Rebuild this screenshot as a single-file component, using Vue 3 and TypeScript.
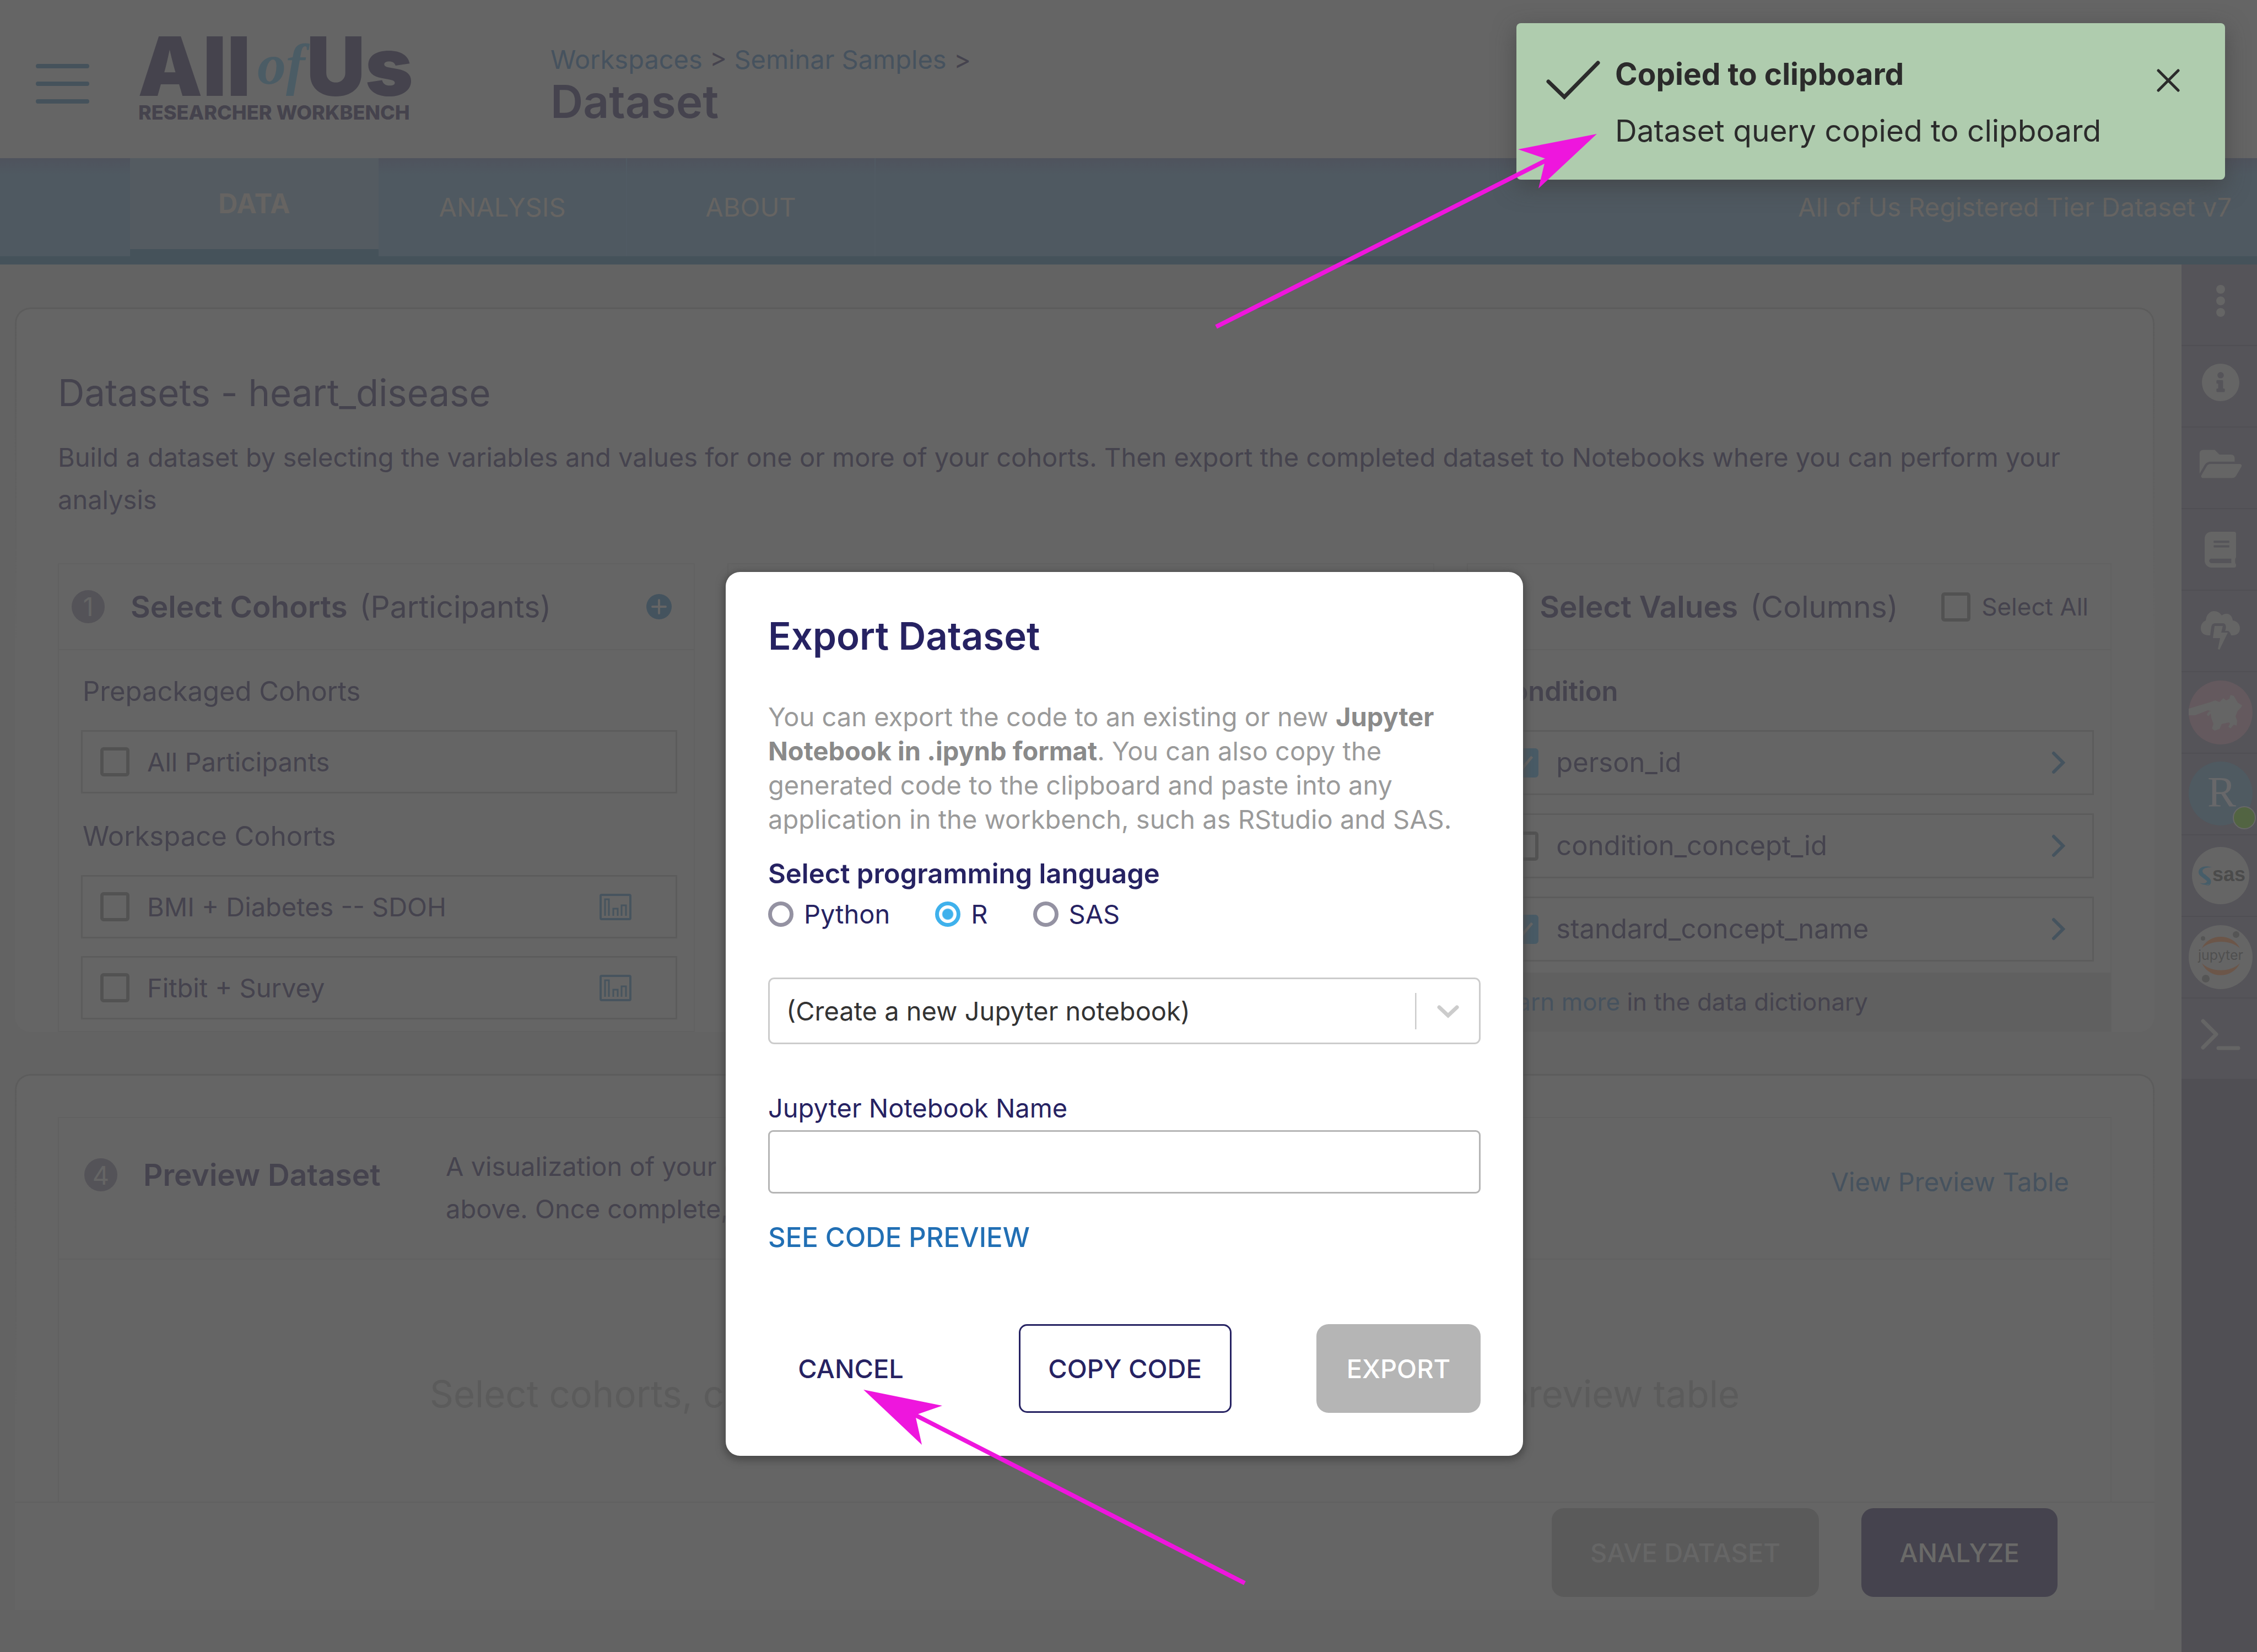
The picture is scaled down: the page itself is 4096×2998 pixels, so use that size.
<script setup lang="ts">
import { ref } from 'vue'

interface Cohort {
  id: string
  name: string
}

interface ValueColumn {
  name: string
  checked: boolean
}

const cohorts: Cohort[] = [
  { id: 'bmi', name: 'BMI + Diabetes -- SDOH' },
  { id: 'fitbit', name: 'Fitbit + Survey' },
]

const columns = ref<ValueColumn[]>([
  { name: 'person_id', checked: true },
  { name: 'condition_concept_id', checked: false },
  { name: 'standard_concept_name', checked: true },
])

const languages = ['Python', 'R', 'SAS']
const language = ref('R')
const notebook = ref('new')
const notebookName = ref('')
</script>

<template>
  <div class="page">
    <header class="top">
      <button class="bare menu" type="button" aria-label="Menu">
        <svg width="97" height="72" viewBox="0 0 97 72" aria-hidden="true">
          <path d="M4 4H93M4 36H93M4 68H93" stroke="#45525b" stroke-width="8" stroke-linecap="round" />
        </svg>
      </button>
      <svg class="logo" width="496" height="160" viewBox="0 0 496 160" role="img" aria-label="All of Us Researcher Workbench">
        <text class="logo-main" x="-3" y="112">All</text>
        <text class="logo-of" x="214" y="90">of</text>
        <text class="logo-main" x="303" y="112">Us</text>
        <text class="logo-sub" x="-2" y="155">RESEARCHER WORKBENCH</text>
      </svg>
      <div class="crumbs">
        <nav class="crumb-line" aria-label="Breadcrumb">
          <a href="#">Workspaces</a> &gt; <a href="#">Seminar Samples</a> &gt;
        </nav>
        <h1>Dataset</h1>
      </div>
    </header>

    <nav class="tabs" aria-label="Workspace">
      <a class="tab active" href="#">DATA</a>
      <a class="tab" href="#">ANALYSIS</a>
      <a class="tab" href="#">ABOUT</a>
      <span class="tier">All of Us Registered Tier Dataset v7</span>
    </nav>

    <div class="body">
      <main>
        <section class="card build">
          <h2>Datasets - heart_disease</h2>
          <p class="intro">
            Build a dataset by selecting the variables and values for one or more of your cohorts. Then export the
            completed dataset to Notebooks where you can perform your analysis
          </p>
          <div class="boxes">
            <section class="box">
              <header class="box-head">
                <span class="step">1</span>
                <h3>Select Cohorts <span>(Participants)</span></h3>
                <button class="bare plus" type="button" aria-label="Add cohort">
                  <svg width="46" height="46" viewBox="0 0 46 46" aria-hidden="true">
                    <circle cx="23" cy="23" r="23" fill="#44535e" />
                    <path d="M23 11V35M11 23H35" stroke="#656565" stroke-width="4" stroke-linecap="round" />
                  </svg>
                </button>
              </header>
              <div class="box-body">
                <h4>Prepackaged Cohorts</h4>
                <div class="rows">
                  <label class="row"><input type="checkbox" /><span>All Participants</span></label>
                </div>
                <h4 class="second">Workspace Cohorts</h4>
                <div class="rows">
                  <label v-for="c in cohorts" :key="c.id" class="row">
                    <input type="checkbox" /><span>{{ c.name }}</span>
                    <svg class="chart" width="58" height="48" viewBox="0 0 58 48" aria-hidden="true">
                      <g fill="none" stroke="#47545e" stroke-width="3">
                        <rect x="2" y="2" width="54" height="44" rx="2" stroke-width="4" />
                        <path d="M10 40V10H17V40M25 40V27H33V40M40 40V21H48V40" />
                      </g>
                    </svg>
                  </label>
                </div>
              </div>
            </section>

            <section class="box" aria-label="Concept sets">
              <div class="box-head"></div>
            </section>

            <section class="box values">
              <header class="box-head">
                <span class="step">3</span>
                <h3>Select Values <span>(Columns)</span></h3>
                <label class="select-all"><input type="checkbox" /><span>Select All</span></label>
              </header>
              <div class="box-body">
                <h4 class="strong">Condition</h4>
                <div class="rows">
                  <label v-for="c in columns" :key="c.name" class="row">
                    <input v-model="c.checked" type="checkbox" /><span>{{ c.name }}</span>
                    <svg class="chevron" width="26" height="42" viewBox="0 0 26 42" aria-hidden="true">
                      <path d="M4 4L21 21L4 38" fill="none" stroke="#45535e" stroke-width="6" stroke-linecap="round" />
                    </svg>
                  </label>
                </div>
              </div>
              <footer class="box-foot"><a href="#">Learn more</a> in the data dictionary</footer>
            </section>
          </div>
        </section>

        <section class="card preview">
          <div class="preview-box">
            <header class="preview-head">
              <div class="preview-title"><span class="step">4</span><h3>Preview Dataset</h3></div>
              <p>
                A visualization of your data table based on concept sets and values<br />
                above. Once complete, export for analysis
              </p>
              <a class="view" href="#">View Preview Table</a>
            </header>
            <p class="empty">Select cohorts, concept sets, and values above to generate a preview table</p>
          </div>
          <footer class="actions">
            <button class="btn muted" type="button" disabled>SAVE DATASET</button>
            <button class="btn dark" type="button">ANALYZE</button>
          </footer>
        </section>
      </main>

      <aside class="side" aria-label="Tools">
        <button class="bare tool high" type="button" aria-label="More actions">
          <svg width="16" height="58" viewBox="0 0 16 58" fill="#656565">
            <circle cx="8" cy="8" r="8" /><circle cx="8" cy="29" r="8" /><circle cx="8" cy="50" r="8" />
          </svg>
        </button>
        <button class="bare tool high" type="button" aria-label="Information">
          <svg width="70" height="70" viewBox="0 0 512 512" fill="#656565">
            <path d="M256 8C119.043 8 8 119.083 8 256c0 136.997 111.043 248 248 248s248-111.003 248-248C504 119.083 392.957 8 256 8zm0 110c23.196 0 42 18.804 42 42s-18.804 42-42 42-42-18.804-42-42 18.804-42 42-42zm56 254c0 6.627-5.373 12-12 12h-88c-6.627 0-12-5.373-12-12v-24c0-6.627 5.373-12 12-12h12v-64h-12c-6.627 0-12-5.373-12-12v-24c0-6.627 5.373-12 12-12h64c6.627 0 12 5.373 12 12v100h12c6.627 0 12 5.373 12 12v24z" />
          </svg>
        </button>
        <button class="bare tool high" type="button" aria-label="Files">
          <svg width="78" height="68" viewBox="0 0 576 512" fill="#656565">
            <path d="M572.694 292.093L500.27 416.248A63.997 63.997 0 0 1 444.989 448H45.025c-18.523 0-30.064-20.093-20.731-36.093l72.424-124.155A64 64 0 0 1 152 256h399.964c18.523 0 30.064 20.093 20.73 36.093zM152 224h328v-48c0-26.51-21.49-48-48-48H272l-64-64H48C21.49 64 0 85.49 0 112v278.046l69.077-118.418C86.214 242.25 117.989 224 152 224z" />
          </svg>
        </button>
        <button class="bare tool" type="button" aria-label="Data dictionary">
          <svg width="57" height="65" viewBox="0 0 448 512" fill="#656565">
            <path d="M448 360V24c0-13.3-10.7-24-24-24H96C43 0 0 43 0 96v320c0 53 43 96 96 96h328c13.3 0 24-10.7 24-24v-16c0-7.5-3.5-14.3-8.9-18.7-4.2-15.4-4.2-59.3 0-74.7 5.4-4.3 8.9-11.1 8.9-18.6zM128 134c0-3.3 2.7-6 6-6h212c3.3 0 6 2.7 6 6v20c0 3.3-2.7 6-6 6H134c-3.3 0-6-2.7-6-6v-20zm0 64c0-3.3 2.7-6 6-6h212c3.3 0 6 2.7 6 6v20c0 3.3-2.7 6-6 6H134c-3.3 0-6-2.7-6-6v-20zm253.4 250H96c-17.7 0-32-14.3-32-32 0-17.6 14.4-32 32-32h285.4c-1.9 17.1-1.9 46.9 0 64z" />
          </svg>
        </button>
        <button class="bare tool" type="button" aria-label="Cloud environment">
          <svg width="72" height="72" viewBox="0 0 72 72" fill="#656565">
            <path d="M14 44C5 44 0 39 0 31C0 24 4 19 9 17C10 6 17 0 24 0C30 0 35 3 38 8C47 1 57 6 58 17C66 18 71 24 71 31C71 39 66 44 58 44H55C54 40 52 38 50 36H44C47 30 46 22 40 22H27C22 22 20 24 19 29L17 44Z" />
            <path d="M25 27H40L37 39H49L34 70L31 69L35 49H22Z" />
          </svg>
        </button>
        <button class="bare tool" type="button" aria-label="Hail">
          <svg width="118" height="118" viewBox="0 0 118 118">
            <circle cx="59" cy="59" r="58" fill="#64595e" />
            <path fill="#656565" d="M1 52L41 40L49 37L57 40L64 33L69 37L75 34L77 27L83 29L90 41L98 46L96 50L90 56L86 66L89 74L88 83L83 81L77 88L73 85L76 79L74 77L61 80L57 89L48 92L43 88L46 80L42 69L41 61L36 66L34 62L38 57L42 57L36 55L13 64L1 64Z" />
          </svg>
        </button>
        <button class="bare tool" type="button" aria-label="RStudio">
          <svg class="spill" width="118" height="118" viewBox="0 0 118 118">
            <circle cx="59" cy="58" r="58" fill="#4f5a61" />
            <text class="r-mark" x="61" y="81" text-anchor="middle">R</text>
            <circle cx="102" cy="102" r="20" fill="#526442" stroke="#686868" stroke-width="2" />
          </svg>
        </button>
        <button class="bare tool" type="button" aria-label="SAS">
          <svg width="104" height="104" viewBox="0 0 104 104">
            <circle cx="52" cy="52" r="52" fill="#656565" />
            <path fill="#465d69" d="M36 37C24 33 12 36 12 46C12 54 27 58 30 66C32 70 28 70 24 69C32 73 36 66 34 60C31 53 19 50 19 44C19 38 28 37 36 37ZM14 65C22 71 32 70 34 62C32 56 27 53 23 49C25 55 30 58 27 63C25 67 19 67 14 65Z" />
            <text class="sas-mark" x="37" y="62">sas</text>
          </svg>
        </button>
        <button class="bare tool" type="button" aria-label="Jupyter">
          <svg width="118" height="118" viewBox="0 0 118 118">
            <circle cx="59" cy="59" r="58" fill="#656565" />
            <path fill="#6c5649" d="M25 43C38 15 80 15 94 43C78 27 41 27 25 43ZM25 70C38 99 80 99 94 70C78 87 41 87 25 70Z" />
            <circle cx="27" cy="25" r="4" fill="#555" />
            <circle cx="87" cy="18" r="6" fill="#555" />
            <circle cx="32" cy="98" r="7" fill="#555" />
            <text class="jup-mark" x="59" y="64" text-anchor="middle">jupyter</text>
          </svg>
        </button>
        <button class="bare tool high" type="button" aria-label="Terminal">
          <svg width="72" height="58" viewBox="0 0 72 58">
            <path fill="none" stroke="#656565" stroke-width="7" stroke-linecap="round" stroke-linejoin="round" d="M4 4L28 28L4 52M32 53H68" />
          </svg>
        </button>
      </aside>
    </div>

    <div class="modal-layer">
      <div class="modal" role="dialog" aria-labelledby="export-title">
        <h2 id="export-title">Export Dataset</h2>
        <p class="about">
          You can export the code to an existing or new <b>Jupyter<br />Notebook in .ipynb format</b>. You can also copy
          the<br />generated code to the clipboard and paste into any<br />application in the workbench, such as RStudio
          and SAS.
        </p>
        <fieldset>
          <legend>Select programming language</legend>
          <label v-for="l in languages" :key="l">
            <input v-model="language" type="radio" name="language" :value="l" /><span>{{ l }}</span>
          </label>
        </fieldset>
        <div class="picker">
          <select v-model="notebook" aria-label="Notebook">
            <option value="new">(Create a new Jupyter notebook)</option>
          </select>
          <svg width="119" height="66" viewBox="0 0 119 66" aria-hidden="true">
            <path d="M1 0V66" stroke="#ccc" stroke-width="3" />
            <path d="M44 26L60 41L76 26" fill="none" stroke="#ccc" stroke-width="7" stroke-linecap="round" />
          </svg>
        </div>
        <label class="name-label" for="nb-name">Jupyter Notebook Name</label>
        <input id="nb-name" v-model="notebookName" class="name" type="text" />
        <a class="code" href="#">SEE CODE PREVIEW</a>
        <div class="modal-actions">
          <button class="btn plain" type="button">CANCEL</button>
          <button class="btn outline" type="button">COPY CODE</button>
          <button class="btn grey" type="button" disabled>EXPORT</button>
        </div>
      </div>
    </div>

    <div class="toast" role="status">
      <svg class="tick" width="98" height="72" viewBox="0 0 98 72" aria-hidden="true">
        <path d="M4 38L33 66L94 4" fill="none" stroke="#2b2b2b" stroke-width="7" stroke-linecap="round" />
      </svg>
      <div class="toast-text">
        <strong>Copied to clipboard</strong>
        <span>Dataset query copied to clipboard</span>
      </div>
      <button class="bare close" type="button" aria-label="Close">
        <svg width="42" height="42" viewBox="0 0 42 42">
          <path d="M3 3L39 39M39 3L3 39" stroke="#2b2b2b" stroke-width="5" stroke-linecap="round" />
        </svg>
      </button>
    </div>

    <svg class="arrows" viewBox="0 0 4096 2998" preserveAspectRatio="xMidYMin meet" aria-hidden="true">
      <path d="M2207 593L2808 290M2259 2873L1661 2568" stroke="#ee16dd" stroke-width="8" />
      <path fill="#ee16dd" d="M2898 243L2755 271L2805 288L2792 342ZM1567 2522L1710 2551L1661 2568L1673 2622Z" />
    </svg>
  </div>
</template>

<style>
body {
  margin: 0;
  background: #636363;
}
</style>

<style scoped>
.page {
  --ink: #45434e;
  --link: #46525e;
  --paper: #656565;
  position: relative;
  display: flex;
  flex-direction: column;
  min-height: 100vh;
  overflow: hidden;
  box-sizing: border-box;
  font-family: Inter, 'Open Sans', sans-serif;
  font-size: 47px;
  line-height: 60px;
  color: var(--ink);
}
.page * {
  box-sizing: border-box;
}
h1, h2, h3, h4, p {
  margin: 0;
  font-weight: 400;
}
a {
  color: var(--link);
  text-decoration: none;
}
button, input, select {
  font: inherit;
  color: inherit;
  margin: 0;
}
.bare {
  display: flex;
  padding: 0;
  border: 0;
  background: none;
}
.top {
  display: flex;
  align-items: flex-start;
  height: 287px;
  padding-left: 65px;
  background: var(--paper);
}
.menu {
  margin: 116px 91px 0 0;
}
.logo {
  margin: 62px 250px 0 0;
  overflow: visible;
}
.logo-main {
  font-size: 148px;
  font-weight: 900;
  fill: #45434d;
}
.logo-of {
  font: italic 700 104px 'Liberation Serif', serif;
  fill: #4b5c65;
}
.logo-sub {
  font-size: 36px;
  font-weight: 800;
  fill: #45434d;
}
.crumbs {
  margin-top: 78px;
}
h1 {
  font-size: 82px;
  line-height: 94px;
  font-weight: 600;
}
.tabs {
  display: flex;
  height: 193px;
  padding-left: 236px;
  border-bottom: 15px solid #45525a;
  background: linear-gradient(#4f535d, #4f5961 30px);
  color: #666462;
}
.tab {
  display: flex;
  align-items: center;
  justify-content: center;
  width: 451px;
  border-right: 2px solid #505a63;
  color: inherit;
}
.tab.active {
  border-right: 0;
  border-bottom: 13px solid #45525a;
  background: #545b61;
  font-size: 49px;
  font-weight: 700;
}
.tier {
  margin: auto 46px auto auto;
}
.body {
  display: flex;
  flex: 1;
}
main {
  flex: 1;
  min-width: 0;
  padding: 78px 49px 0 27px;
}
.card {
  position: relative;
  border-radius: 28px;
  background: var(--paper);
}
.card::before {
  content: '';
  position: absolute;
  inset: 0;
  border: 3px solid #5c5c5c;
  border-bottom: 0;
  border-radius: 28px;
  pointer-events: none;
  -webkit-mask-image: linear-gradient(#000, transparent 600px);
  mask-image: linear-gradient(#000, transparent 600px);
}
.build {
  padding: 115px 78px 0;
}
.build h2 {
  font-size: 67px;
  line-height: 80px;
}
.intro {
  margin: 38px 0 77px;
  line-height: 77px;
}
.boxes {
  display: grid;
  grid-template-columns: 1155fr 1283fr 1169fr;
  gap: 59px;
}
.box {
  display: flex;
  flex-direction: column;
  min-width: 0;
  border: 2px solid #616161;
}
.box-head {
  display: flex;
  align-items: center;
  height: 156px;
  padding: 0 40px 0 23px;
  border-bottom: 2px solid #616161;
}
.step {
  display: flex;
  align-items: center;
  justify-content: center;
  width: 60px;
  height: 60px;
  margin-right: 47px;
  border-radius: 50%;
  background: #545358;
  color: var(--paper);
}
h3 {
  font-size: 55px;
  font-weight: 600;
}
h3 span {
  margin-left: 8px;
  font-weight: 400;
}
.plus, .select-all {
  margin-left: auto;
}
.select-all {
  display: flex;
  align-items: center;
  gap: 20px;
  font-size: 44px;
}
input[type='checkbox'] {
  position: relative;
  flex: none;
  appearance: none;
  width: 53px;
  height: 53px;
  border: 6px solid #525252;
  border-radius: 6px;
}
input[type='checkbox']:checked {
  border-color: #485a65;
  background: #485a65;
}
input[type='checkbox']:checked::after {
  content: '';
  position: absolute;
  left: 13px;
  top: 2px;
  width: 12px;
  height: 24px;
  border: solid var(--paper);
  border-width: 0 5px 5px 0;
  transform: rotate(40deg);
}
.box-body {
  padding: 45px 30px 20px 40px;
}
h4 {
  padding-left: 3px;
  margin-bottom: 40px;
  font-size: 49px;
}
h4.second {
  margin-top: 48px;
}
h4.strong {
  font-weight: 600;
}
.rows {
  display: flex;
  flex-direction: column;
  gap: 32px;
}
.row {
  display: flex;
  align-items: center;
  gap: 32px;
  height: 115px;
  padding: 0 80px 0 32px;
  border: 3px solid #5c5c5c;
}
.chart, .chevron {
  margin-left: auto;
}
.values .rows {
  gap: 33px;
}
.values .row {
  height: 118px;
  padding-right: 48px;
  font-size: 49px;
}
.box-foot {
  margin-top: auto;
  padding: 23px 38px;
  background: #606060;
  font-size: 44px;
}
.preview {
  margin-top: 76px;
  padding: 78px 0 24px;
  border-radius: 28px 28px 0 0;
}
.preview-box {
  height: 698px;
  margin: 0 78px;
  border: 2px solid #616161;
  border-bottom: 0;
}
.preview-head {
  display: flex;
  height: 257px;
  padding: 49px 75px 0 46px;
  border-bottom: 2px solid #616161;
  line-height: 77px;
}
.preview-title {
  display: flex;
  align-items: center;
  flex: none;
  width: 656px;
  height: 108px;
}
.view {
  margin-left: auto;
  line-height: 134px;
}
.empty {
  padding-top: 200px;
  font-size: 67px;
  line-height: 88px;
  text-align: center;
  color: #5b5b5b;
}
.actions {
  display: flex;
  justify-content: flex-end;
  gap: 77px;
  padding: 10px 176px 0 0;
  border-top: 2px solid #606060;
}
.btn {
  height: 161px;
  padding: 0;
  border: 0;
  border-radius: 22px;
  background: none;
  font-weight: 500;
}
.muted {
  width: 485px;
  background: #5a5a5a;
  color: #666;
}
.dark {
  width: 356px;
  background: #45434e;
  color: #6a6a68;
}
.side {
  width: 137px;
  background: #504f54;
}
.tool {
  align-items: center;
  justify-content: center;
  width: 100%;
  height: 148px;
  padding-left: 4px;
  border-bottom: 2px solid #504f54;
  background: #555459;
}
.tool.high {
  padding-bottom: 14px;
}
.spill {
  overflow: visible;
}
.r-mark {
  font: 78px 'Liberation Serif', serif;
  fill: #68686a;
}
.sas-mark {
  font: 700 36px 'Liberation Sans', sans-serif;
  fill: #4b4b4b;
}
.jup-mark {
  font-size: 25px;
  fill: #505050;
}
.modal-layer {
  position: absolute;
  inset: 0;
  display: flex;
  align-items: flex-start;
  justify-content: center;
  padding: 1038px 15px 0 0;
}
.modal {
  display: flex;
  flex-direction: column;
  width: 1447px;
  padding: 78px 77px;
  border-radius: 26px;
  background: #fff;
  box-shadow: 0 4px 14px 4px #4a4a4a;
  color: #262262;
}
.modal h2 {
  font-size: 69px;
  line-height: 76px;
  font-weight: 600;
}
.about {
  margin-top: 78px;
  line-height: 62px;
  color: #9a9a9a;
  white-space: nowrap;
}
.about b {
  color: #8a8a8a;
  font-weight: 700;
}
fieldset {
  display: flex;
  gap: 82px;
  margin: 38px 0 0;
  padding: 0;
  border: 0;
}
legend {
  padding: 0;
  margin-bottom: 13px;
  font-size: 49px;
  font-weight: 600;
}
fieldset label {
  display: flex;
  align-items: center;
  gap: 19px;
}
input[type='radio'] {
  appearance: none;
  width: 46px;
  height: 46px;
  border: 7px solid #9492a2;
  border-radius: 50%;
}
input[type='radio']:checked {
  border-color: #3fb1ec;
  background: radial-gradient(#3fb1ec 9px, #fff 11px);
}
.picker {
  position: relative;
  margin-top: 85px;
}
.picker svg {
  position: absolute;
  right: 0;
  top: 28px;
  pointer-events: none;
}
select {
  display: block;
  appearance: none;
  width: 100%;
  height: 121px;
  padding: 0 30px;
  border: 3px solid #ccc;
  border-radius: 11px;
  background: #fff;
  color: #333;
}
.name-label {
  margin-top: 86px;
}
.name {
  height: 115px;
  margin-top: 10px;
  padding: 0 30px;
  border: 3px solid #b5b5b5;
  border-radius: 9px;
  background: #fff;
}
.code {
  margin-top: 50px;
  color: #216fb4;
  font-size: 49px;
  font-weight: 500;
}
.modal-actions {
  display: flex;
  justify-content: space-between;
  margin-top: 127px;
}
.plain {
  width: 300px;
}
.outline {
  width: 386px;
  border: 3px solid #262262;
  border-radius: 15px;
}
.grey {
  width: 298px;
  background: #b5b5b5;
  color: #fff;
}
.toast {
  position: absolute;
  top: 42px;
  right: 58px;
  display: flex;
  align-items: flex-start;
  width: 1286px;
  height: 284px;
  padding: 62px 82px 0 54px;
  border-radius: 8px;
  background: #afccae;
  box-shadow: 0 12px 40px rgba(60, 60, 60, 0.6);
  color: #2b2b2b;
  font-size: 55px;
}
.tick {
  margin-top: 6px;
}
.toast-text {
  display: flex;
  flex-direction: column;
  gap: 43px;
  margin-left: 27px;
}
.close {
  margin: 21px 0 0 auto;
}
.arrows {
  position: absolute;
  inset: 0 0 auto;
  width: 100%;
  pointer-events: none;
}
</style>
